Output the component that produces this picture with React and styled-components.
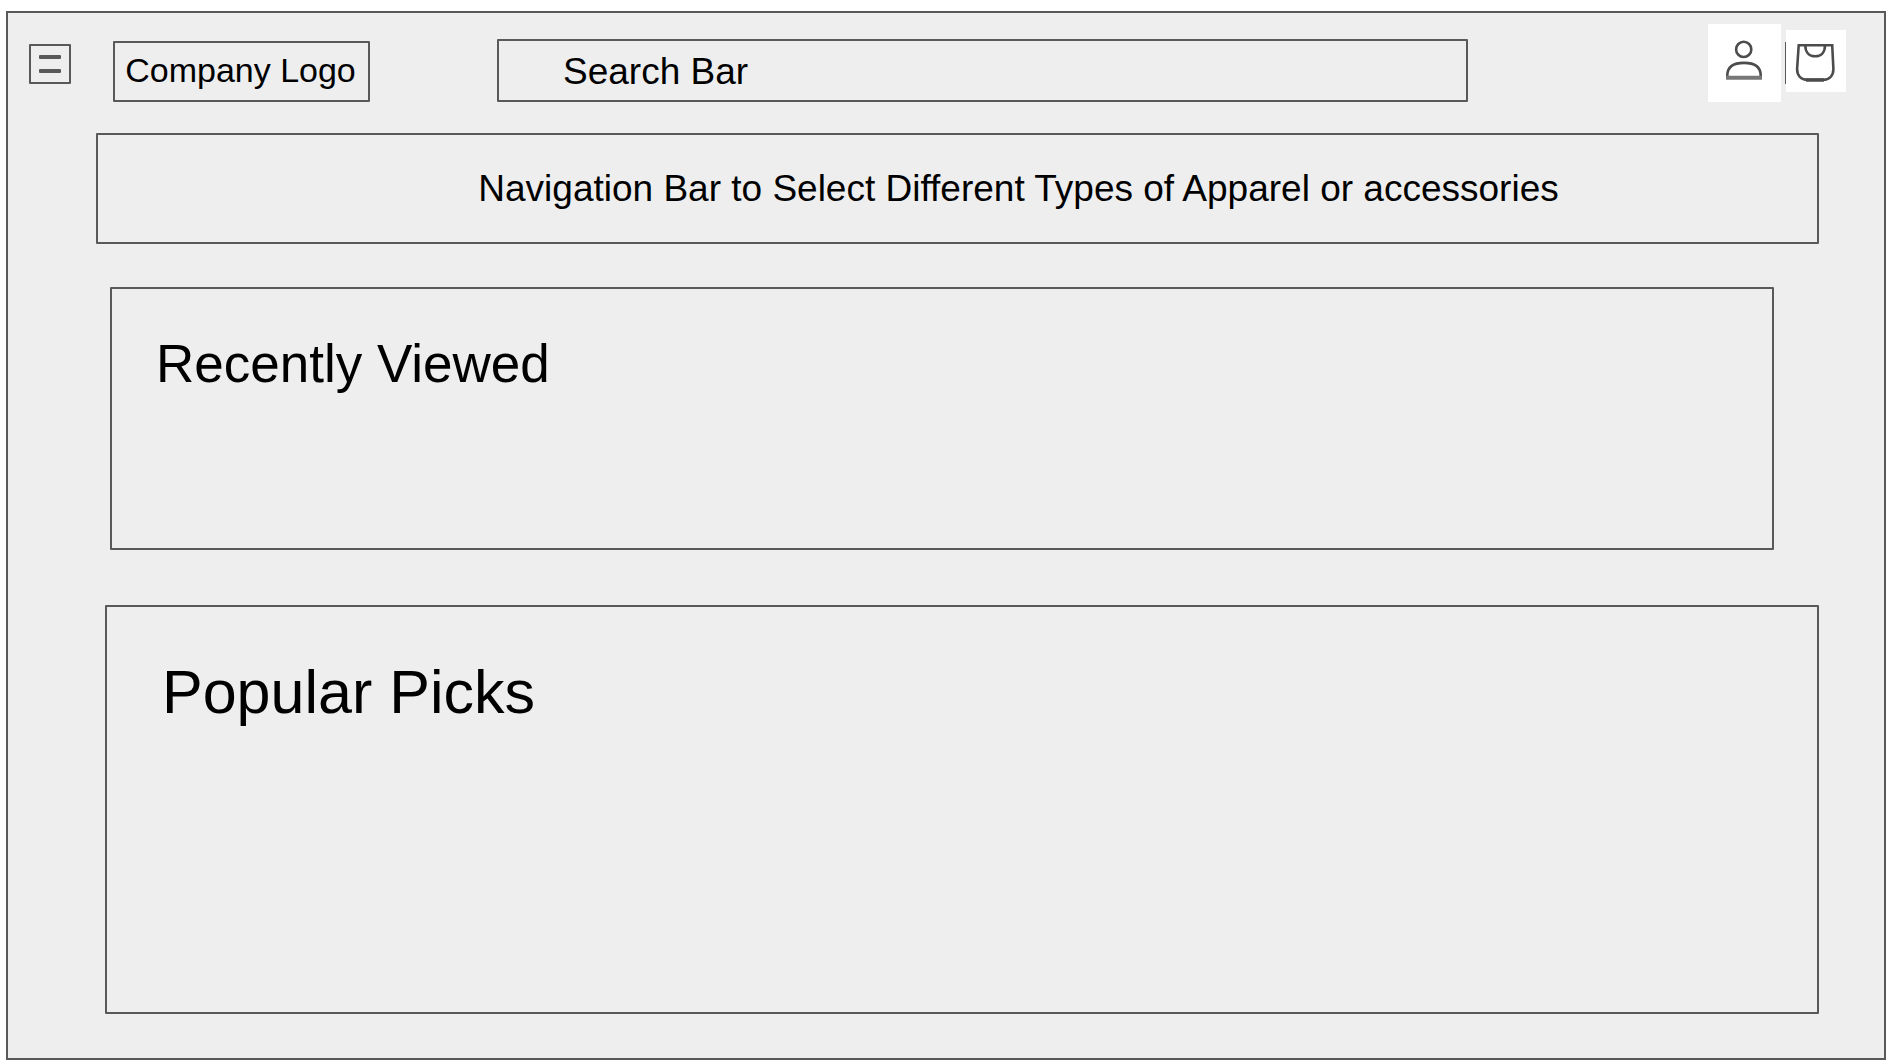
import React from "react";
import styled, { createGlobalStyle } from "styled-components";

const line = "#595959";

const GlobalStyle = createGlobalStyle`
  *, *::before, *::after { box-sizing: border-box; }
  body {
    margin: 0;
    background: #ffffff;
    color: #000000;
    font-family: "Liberation Sans", Arial, Helvetica, sans-serif;
  }
`;

const Page = styled.div`
  display: flex;
  flex-direction: column;
  min-height: calc(100vh - 15px);
  margin: 11px 7px 4px 6px;
  padding-bottom: 44px;
  border: 2px solid ${line};
  background: #eeeeee;
`;

const Header = styled.header`
  display: flex;
  align-items: flex-end;
  padding: 11px 38px 0 21px;
`;

const MenuButton = styled.button`
  display: flex;
  flex-direction: column;
  align-items: center;
  justify-content: center;
  gap: 10px;
  flex: none;
  width: 42px;
  height: 40px;
  margin: 0 42px 18px 0;
  padding: 0;
  border: 2px solid ${line};
  border-radius: 1px;
  background: transparent;
  cursor: pointer;
`;

const MenuLine = styled.span`
  width: 22px;
  height: 4px;
  border-radius: 1px;
  background: ${line};
`;

const Logo = styled.a`
  flex: none;
  width: 257px;
  padding: 7px 2px 10px 0;
  border: 2px solid ${line};
  border-radius: 1px;
  color: inherit;
  font-size: 34px;
  line-height: 40px;
  text-align: center;
  text-decoration: none;
  white-space: nowrap;
`;

const Search = styled.form`
  display: flex;
  flex: 1;
  min-width: 0;
  margin: 0 240px 0 127px;
`;

const SearchInput = styled.input`
  flex: 1;
  min-width: 0;
  height: 63px;
  padding: 2px 16px 0 64px;
  border: 2px solid ${line};
  border-radius: 1px;
  background: transparent;
  color: inherit;
  font: inherit;
  font-size: 37px;

  &::placeholder {
    color: #000000;
    opacity: 1;
  }
`;

const Actions = styled.div`
  display: flex;
  align-items: flex-end;
  flex: none;
`;

const IconButton = styled.button`
  display: flex;
  width: ${(p) => p.$width}px;
  height: ${(p) => p.$height}px;
  margin: 0 0 ${(p) => p.$lift || 0}px;
  padding: 0;
  border: 0;
  background: #ffffff;
  cursor: pointer;
`;

const Divider = styled.span`
  width: 1px;
  height: 42px;
  margin: 0 0 18px 4px;
  background: ${line};
`;

const NavBar = styled.nav`
  display: flex;
  align-items: center;
  justify-content: center;
  min-height: 111px;
  margin: 31px 65px 0 88px;
  padding-left: 122px;
  border: 2px solid ${line};
  border-radius: 1px;
  font-size: 37px;
  line-height: 42px;
`;

const Main = styled.main`
  display: flex;
  flex-direction: column;
  flex: 1;
`;

const RecentPanel = styled.section`
  min-height: 263px;
  margin: 43px 110px 0 102px;
  padding: 45px 44px;
  border: 2px solid ${line};
  border-radius: 1px;
`;

const PopularPanel = styled.section`
  flex: 1;
  min-height: 409px;
  margin: 55px 65px 0 97px;
  padding: 50px 55px;
  border: 2px solid ${line};
  border-radius: 1px;
`;

const Title = styled.h2`
  margin: 0;
  font-size: ${(p) => (p.$large ? 61 : 53)}px;
  line-height: ${(p) => (p.$large ? 70 : 60)}px;
  font-weight: 400;
`;

function UserIcon() {
  return (
    <svg width="73" height="78" viewBox="0 0 73 78" fill="none" stroke="#4c4c4c" strokeWidth="2.6" aria-hidden="true">
      <circle cx="35.7" cy="25.4" r="7.6" />
      <path d="M19.3 54V51.5C19.3 42.5 25 38.9 36 38.9S52.7 42.5 52.7 51.5V54" />
      <path d="M18 53.8H54" stroke="#777777" strokeWidth="4" />
    </svg>
  );
}

function BagIcon() {
  return (
    <svg width="60" height="62" viewBox="0 0 60 62" fill="none" stroke="#4c4c4c" strokeWidth="2.6" aria-hidden="true">
      <path d="M20 50H38" stroke="#777777" strokeWidth="4" />
      <path d="M12.7 15.2H46.2L47.4 39C47.4 45.5 43.5 49.8 37 49.8H21.5C15 49.8 11.1 45.5 11.1 39Z" />
      <path d="M19.3 15.2C19.3 22 23 26.3 29.2 26.3S39 22 39 15.2" />
    </svg>
  );
}

export default function App() {
  return (
    <>
      <GlobalStyle />
      <Page>
        <Header>
          <MenuButton type="button" aria-label="Menu">
            <MenuLine />
            <MenuLine />
          </MenuButton>
          <Logo href="#">Company Logo</Logo>
          <Search role="search">
            <SearchInput type="text" placeholder="Search Bar" aria-label="Search Bar" />
          </Search>
          <Actions>
            <IconButton type="button" aria-label="Account" $width={73} $height={78}>
              <UserIcon />
            </IconButton>
            <Divider />
            <IconButton type="button" aria-label="Shopping bag" $width={60} $height={62} $lift={10}>
              <BagIcon />
            </IconButton>
          </Actions>
        </Header>
        <NavBar>Navigation Bar to Select Different Types of Apparel or accessories</NavBar>
        <Main>
          <RecentPanel>
            <Title>Recently Viewed</Title>
          </RecentPanel>
          <PopularPanel>
            <Title $large>Popular Picks</Title>
          </PopularPanel>
        </Main>
      </Page>
    </>
  );
}
